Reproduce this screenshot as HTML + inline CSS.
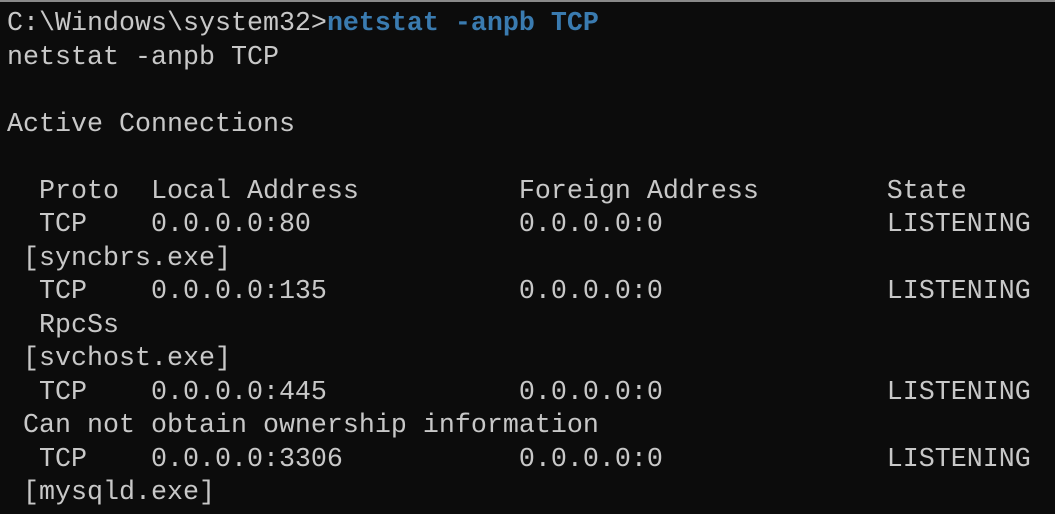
<!DOCTYPE html>
<html><head><meta charset="utf-8"><style>
html,body{margin:0;padding:0;background:#0c0c0c;width:1055px;height:514px;overflow:hidden}
body{border-top:2px solid #8a8a8a;box-sizing:border-box}
pre{margin:0;position:absolute;left:7px;top:8px;font-family:"Liberation Mono",monospace;font-size:26.67px;line-height:33.5px;color:#c8c8c8}
b{color:#3a7bb0}
</style></head><body><pre>C:\Windows\system32&gt;<b>netstat -anpb TCP</b>
netstat -anpb TCP

Active Connections

  Proto  Local Address          Foreign Address        State
  TCP    0.0.0.0:80             0.0.0.0:0              LISTENING
 [syncbrs.exe]
  TCP    0.0.0.0:135            0.0.0.0:0              LISTENING
  RpcSs
 [svchost.exe]
  TCP    0.0.0.0:445            0.0.0.0:0              LISTENING
 Can not obtain ownership information
  TCP    0.0.0.0:3306           0.0.0.0:0              LISTENING
 [mysqld.exe]</pre></body></html>
